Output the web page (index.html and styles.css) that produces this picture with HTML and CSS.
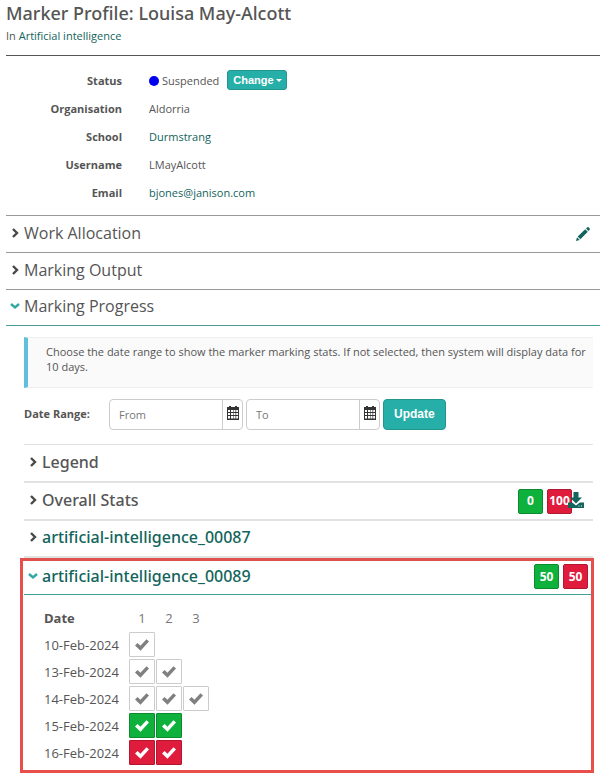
FILE: index.html
```html
<!DOCTYPE html>
<html lang="en">
<head>
<meta charset="utf-8">
<title>Marker Profile</title>
<link rel="stylesheet" href="styles.css">
</head>
<body>
<svg class="defs" aria-hidden="true">
  <symbol id="right" viewBox="0 0 8 10"><path d="M2 1 6 5 2 9" fill="none" stroke="currentColor" stroke-width="2.4"/></symbol>
  <symbol id="down" viewBox="0 0 10 8"><path d="M1 2 5 5.5 9 2" fill="none" stroke="currentColor" stroke-width="2.4"/></symbol>
  <symbol id="check" viewBox="0 0 16 14"><path d="M1 7.6 3.6 5l2.8 2.7L12.5 1.2 15 3.6 6.5 12.8z" fill="currentColor"/></symbol>
  <symbol id="calendar" viewBox="0 0 12 14"><path fill="currentColor" fill-rule="evenodd" d="M0 1h2V0h2v1h4V0h2v1h2v13H0zM1 4v2h2V4zM4 4v2h2V4zM6.500 4v2h2V4zM9.200 4v2H11V4zM1 7v2h2V7zM4 7v2h2V7zM6.500 7v2h2V7zM9.200 7v2H11V7zM1 10v2.500h2V10zM4 10v2.500h2V10zM6.500 10v2.500h2V10zM9.200 10v2.500H11V10z"/></symbol>
</svg>
<main class="page">
  <header class="header">
    <h1>Marker Profile: Louisa May-Alcott</h1>
    <p>In <a href="#">Artificial intelligence</a></p>
  </header>

  <dl class="profile">
    <dt>Status</dt>
    <dd><span class="dot"></span>Suspended <button class="btn btn-small" type="button">Change<span class="caret"></span></button></dd>
    <dt>Organisation</dt><dd>Aldorria</dd>
    <dt>School</dt><dd><a href="#">Durmstrang</a></dd>
    <dt>Username</dt><dd>LMayAlcott</dd>
    <dt>Email</dt><dd><a href="#">bjones@janison.com</a></dd>
  </dl>

  <section class="panel">
    <h2><button class="toggle" type="button"><svg class="chevron"><use href="#right"/></svg>Work Allocation</button></h2>
    <a class="edit" href="#" aria-label="Edit work allocation"><svg viewBox="0 0 14 14"><path fill="currentColor" d="M0 14 1 10.300 3.700 13zM1.700 9.500 9.200 2.200 11.800 4.800 4.400 12.200zM10 1.500 11.300.2q.6-.4 1.200.1l1.200 1.200q.5.6 0 1.200L12.500 4z"/></svg></a>
  </section>
  <section class="panel">
    <h2><button class="toggle" type="button"><svg class="chevron"><use href="#right"/></svg>Marking Output</button></h2>
  </section>
  <section class="panel panel-open">
    <h2><button class="toggle" type="button"><svg class="chevron open"><use href="#down"/></svg>Marking Progress</button></h2>
  </section>

  <div class="progress">
    <p class="callout">Choose the date range to show the marker marking stats. If not selected, then system will display data for 10 days.</p>
    <form class="range">
      <label for="from">Date Range:</label>
      <div class="date"><input id="from" type="text" placeholder="From"><button type="button" aria-label="Pick start date"><svg><use href="#calendar"/></svg></button></div>
      <div class="date"><input type="text" placeholder="To" aria-label="To"><button type="button" aria-label="Pick end date"><svg><use href="#calendar"/></svg></button></div>
      <button class="btn btn-update" type="button">Update</button>
    </form>

    <section class="item first">
      <h3><button class="toggle" type="button"><svg class="chevron"><use href="#right"/></svg>Legend</button></h3>
    </section>
    <section class="item">
      <h3><button class="toggle" type="button"><svg class="chevron"><use href="#right"/></svg>Overall Stats</button></h3>
      <div class="badges overall"><span class="badge green">0</span><span class="badge red">100</span>
        <a class="download" href="#" aria-label="Download stats"><svg viewBox="0 0 16 16"><path fill="currentColor" fill-rule="evenodd" d="M5.500 0h5v5.500H14L8 11.500 2 5.500h3.500zM0 10.500h4.200L8 13.500l3.800-3H16V16H0zM10.500 13.500v1h1v-1zM13 13.500v1h1v-1z"/></svg></a>
      </div>
    </section>
    <section class="item last">
      <h3><button class="toggle link" type="button"><svg class="chevron"><use href="#right"/></svg>artificial-intelligence_00087</button></h3>
    </section>
    <section class="highlight">
      <div class="item item-open">
        <h3><button class="toggle link" type="button"><svg class="chevron open"><use href="#down"/></svg>artificial-intelligence_00089</button></h3>
        <div class="badges"><span class="badge green">50</span><span class="badge red">50</span></div>
      </div>
      <table class="stats">
        <thead><tr><th scope="col">Date</th><th scope="col">1</th><th scope="col">2</th><th scope="col">3</th></tr></thead>
        <tbody>
          <tr><td>10-Feb-2024</td><td><span class="mark"><svg><use href="#check"/></svg></span></td><td></td><td></td></tr>
          <tr><td>13-Feb-2024</td><td><span class="mark"><svg><use href="#check"/></svg></span></td><td><span class="mark"><svg><use href="#check"/></svg></span></td><td></td></tr>
          <tr><td>14-Feb-2024</td><td><span class="mark"><svg><use href="#check"/></svg></span></td><td><span class="mark"><svg><use href="#check"/></svg></span></td><td><span class="mark"><svg><use href="#check"/></svg></span></td></tr>
          <tr><td>15-Feb-2024</td><td><span class="mark green"><svg><use href="#check"/></svg></span></td><td><span class="mark green"><svg><use href="#check"/></svg></span></td><td></td></tr>
          <tr><td>16-Feb-2024</td><td><span class="mark red"><svg><use href="#check"/></svg></span></td><td><span class="mark red"><svg><use href="#check"/></svg></span></td><td></td></tr>
        </tbody>
      </table>
    </section>
  </div>
</main>
</body>
</html>
```
FILE: styles.css
```css
* { box-sizing: border-box; }
body { margin: 0; background: #fff; color: #555; font: 11px/16px "Open Sans", sans-serif; }
h1, h2, h3, p, dl, dd { margin: 0; }
a { color: #12645c; text-decoration: none; }
button { font: inherit; color: inherit; cursor: pointer; }
svg { display: block; }
.defs { display: none; }
.page { padding-left: 6px; }

.header { height: 56px; border-bottom: 1px solid #555; }
.header h1 { padding-top: 1px; font-family: "Noto Sans", sans-serif; font-size: 18px; line-height: 24px; font-weight: 500; }
.header p { padding-top: 3px; }

.profile { display: grid; grid-template-columns: 116px 1fr; grid-auto-rows: 28px; column-gap: 27px; padding: 11px 0 8px; align-items: center; }
.profile dt { font-weight: 700; text-align: right; }
.profile dd { display: flex; align-items: center; }
.dot { width: 10px; height: 10px; margin-right: 3px; border-radius: 50%; background: #00e; }

.btn { border: 1px solid #23958f; border-radius: 3px; background: #26aea8; color: #fff; font-family: "Liberation Sans", sans-serif; font-weight: 700; }
.btn-small { display: flex; align-items: center; height: 20px; margin: 0 0 3px 8px; padding: 0 4px 0 5px; font-size: 11px; }
.caret { margin: 2px 0 0 2px; border: 3px solid transparent; border-top-color: #fff; border-bottom: 0; }

.panel { position: relative; border-top: 1px solid #999; }
.panel h2 { font-size: 16px; line-height: 24px; font-weight: 400; padding: 5px 0 7px; }
.panel-open { border-bottom: 1px solid #4c9c99; }
.panel-open h2 { padding: 4px 0 7px; }
.toggle { display: flex; align-items: center; padding: 0; border: 0; background: none; }
.chevron { width: 8px; height: 10px; margin: 0 5px 0 5px; color: #484848; }
.chevron.open { width: 10px; height: 8px; margin: 0 4px; color: #2fa7a2; }
.edit { position: absolute; right: 10px; top: 11px; }
.edit svg { width: 14px; height: 14px; }

.progress { margin: 11px 7px 0 18px; }
.callout { min-height: 51px; padding: 6px 4px 13px 18px; border: 1px solid #eee; border-left: 4px solid #5fbfdc; border-right: 0; background: #fafafa; line-height: 15px; }
.range { display: flex; align-items: center; gap: 3px; padding: 11px 0 14px; }
.range label { width: 82px; padding-bottom: 2px; font-weight: 700; }
.date { display: flex; width: 134px; height: 31px; border: 1px solid #ccc; border-radius: 4px; }
.date input { flex: 1; min-width: 0; padding: 0 9px; border: 0; background: none; font: inherit; color: #555; }
.date input::placeholder { color: #777; opacity: 1; }
.date button { display: grid; place-items: start center; width: 20px; padding: 6px 0 0; border: 0; border-left: 1px solid #ccc; background: none; color: #333; }
.date svg { width: 12px; height: 14px; }
.btn-update { height: 31px; padding: 0 10px 2px; border-radius: 4px; font-size: 12px; }

.item { display: flex; justify-content: space-between; align-items: center; height: 38px; border-top: 2px solid #e2e2e2; }
.item.first { border-top-width: 1px; height: 37px; }
.item.last { height: 39px; border-bottom: 2px solid #e2e2e2; }
.item h3 { padding-bottom: 3px; font-family: "Noto Sans", sans-serif; font-size: 16px; line-height: 22px; font-weight: 500; }
.link { color: #12645c; }
.badges { display: flex; gap: 4px; margin-right: 4px; }
.overall { position: relative; margin-right: 21px; }
.badge { display: flex; align-items: center; justify-content: center; width: 25px; height: 25px; border: 1px solid #0b8a2e; border-radius: 2px; background: #0fb13d; color: #fff; font-size: 12px; font-weight: 700; }
.badge.red { border-color: #b0182f; background: #df1c3c; }
.download { position: absolute; right: -12px; top: 3px; }
.download svg { width: 16px; height: 16px; }

.highlight { margin: 0 -1px 0 -4px; padding-bottom: 4px; border: 3px solid #e84e4a; border-top-color: #df514d; }
.item-open { height: 34px; margin-left: 1px; border-top: 0; border-bottom: 1px solid #43a09b; }
.item-open .badges { margin-right: 3px; padding-bottom: 2px; }
.stats { margin: 9px 0 0 21px; border-collapse: collapse; font-size: 13px; line-height: 18px; }
.stats th, .stats td { height: 27px; padding: 0 1px 0 0; text-align: left; font-weight: 400; }
.stats th:first-child, .stats td:first-child { width: 85px; }
.stats th:first-child { font-weight: 700; }
.stats th + th { width: 27px; text-align: center; color: #777; }
.mark { display: grid; place-items: center; width: 26px; height: 25px; border: 1px solid #ccc; border-radius: 1px; color: #808080; }
.mark svg { width: 16px; height: 14px; }
.mark.green { border-color: #0b8a2e; background: #0fb13d; color: #fff; }
.mark.red { border-color: #b0182f; background: #df1c3c; color: #fff; }
```
